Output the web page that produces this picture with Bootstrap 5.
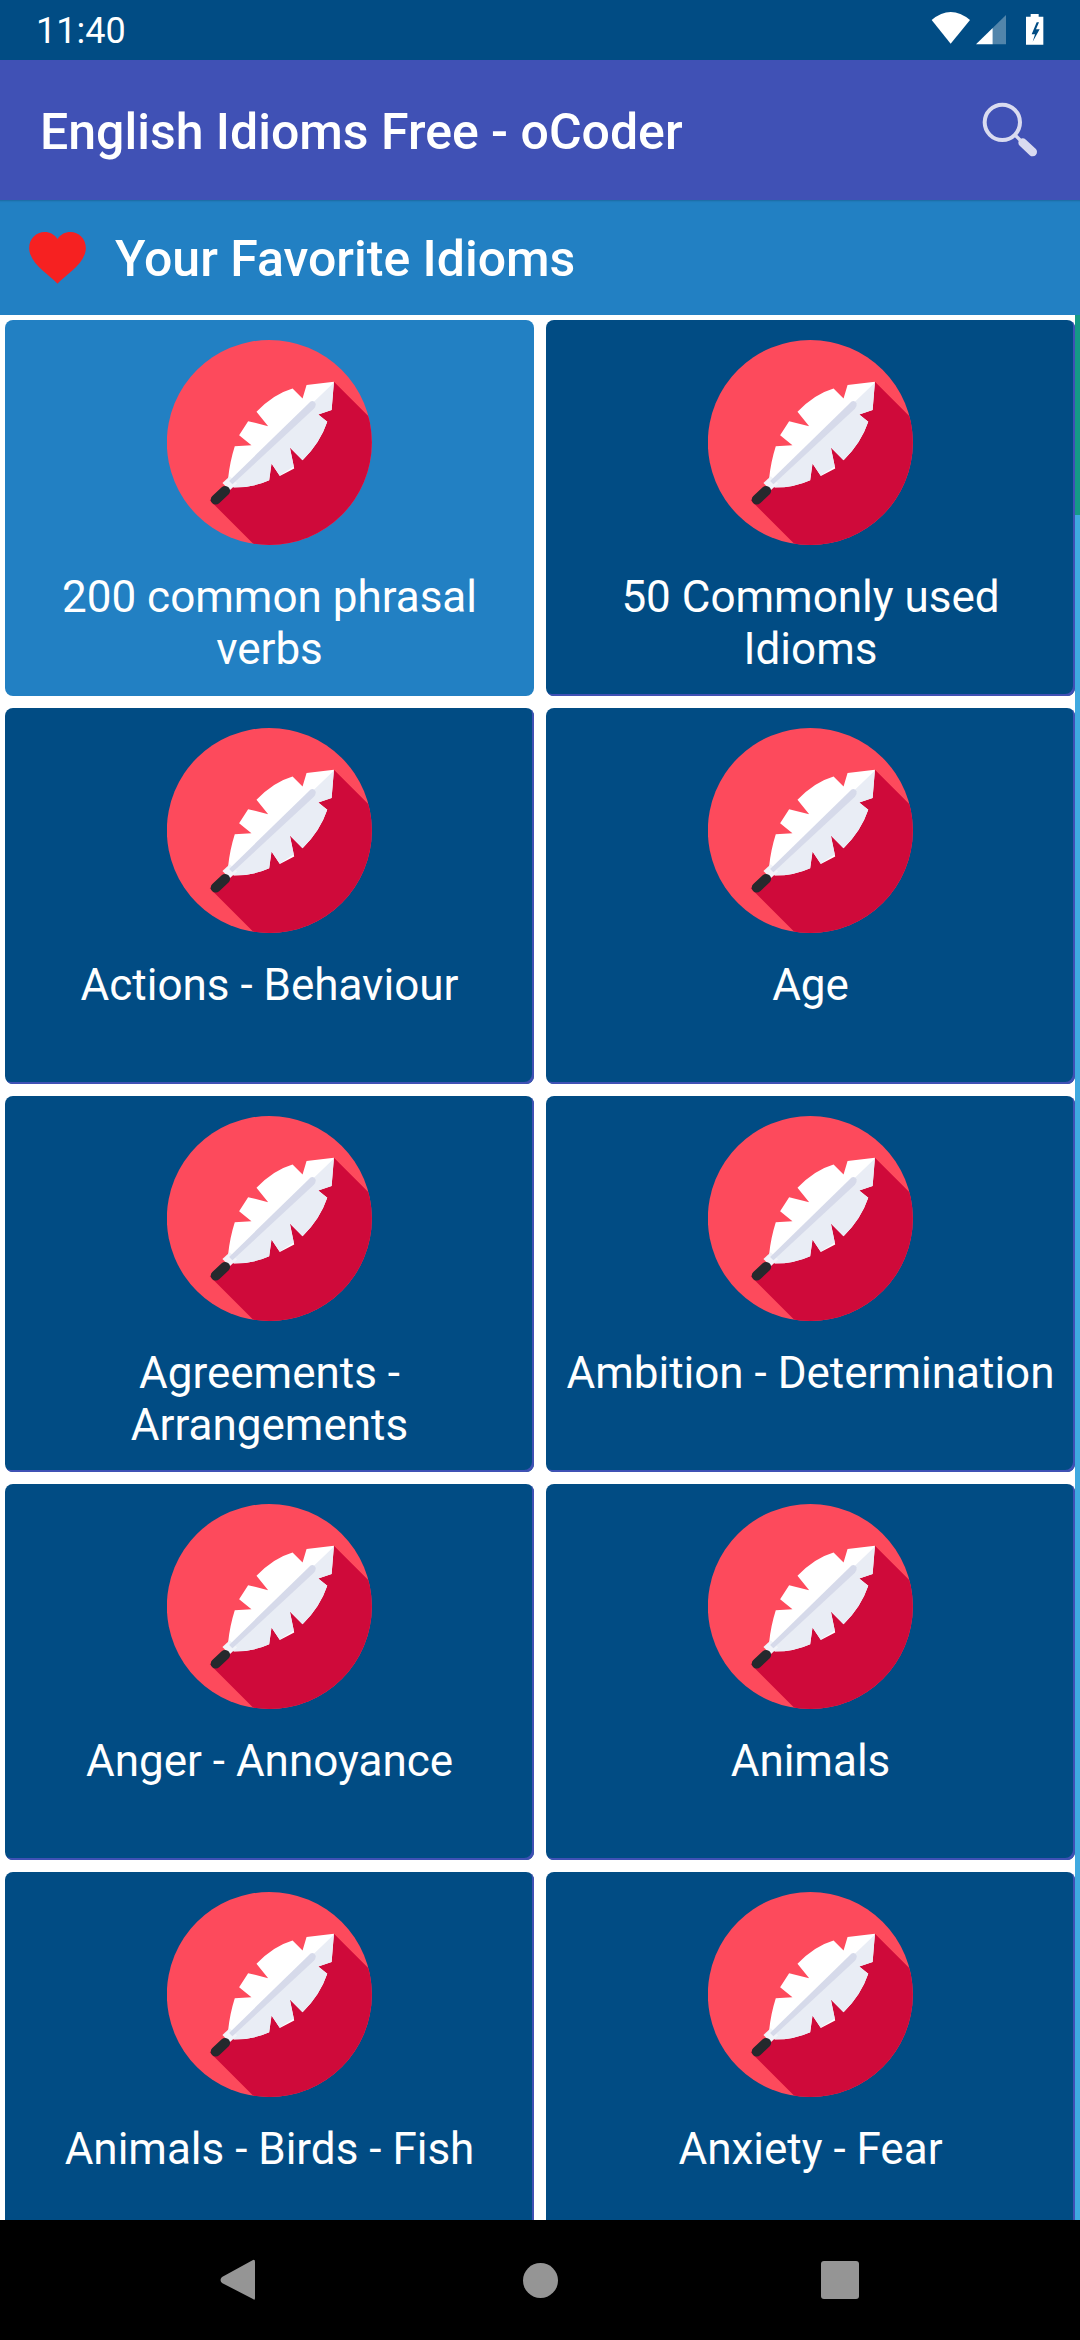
<!DOCTYPE html>
<html lang="en">
<head>
  <meta charset="UTF-8">
  <title>English Idioms Free - oCoder</title>
  <meta name="viewport" content="width=device-width, initial-scale=1">
  <link href="https://cdn.jsdelivr.net/npm/bootstrap@5.3.3/dist/css/bootstrap.min.css" rel="stylesheet">
  <style>
    body {
      width: 1080px;
      height: 2340px;
      overflow: hidden;
      font-family: Roboto, "Liberation Sans", sans-serif;
      background-color: #fff;
    }
    .phone-shell { height: 2340px; }
    .status-strip {
      height: 60px;
      padding: 0 36px;
      background-color: #014c84;
      color: #fff;
      font-size: 36px;
    }
    .status-time { padding-top: 2px; }
    .app-bar {
      height: 140px;
      padding: 0 40px;
      background-color: #4051b5;
    }
    .app-title {
      margin: 0;
      padding-top: 3px;
      color: #fff;
      font-size: 50px;
      font-weight: 500;
    }
    .fav-head {
      height: 115px;
      padding: 0 29px;
      gap: 29px;
      background-color: #2280c3;
      box-shadow: inset 0 3px 2px -2px rgba(0, 0, 0, .18);
    }
    .fav-title {
      margin: 0;
      padding-top: 3px;
      color: #fff;
      font-size: 50px;
      font-weight: 500;
    }
    .tile-area { min-height: 0; overflow: hidden; }
    .tile-scroll {
      padding: 5px 0 0 5px;
      display: grid;
      grid-template-columns: 529px 529px;
      grid-auto-rows: 376px;
      column-gap: 12px;
      row-gap: 12px;
    }
    .track {
      width: 5px;
      background-color: #3fa9e0;
    }
    .thumb {
      top: 0;
      height: 200px;
      background-color: #159a86;
    }
    .tile {
      padding-top: 20px;
      border: 0;
      border-radius: 8px;
      background-color: #014c84;
      box-shadow: inset -2px -2px 0 #4051b5;
      color: #fff;
      font-size: 44px;
      line-height: 52px;
    }
    .tile.picked {
      background-color: #2280c3;
      box-shadow: none;
    }
    .tile svg { width: 205px; height: 205px; flex: none; }
    .tile-text { padding: 26px 8px 0; }
    .soft-nav {
      height: 120px;
      background-color: #000;
    }
  </style>
</head>
<body>
  <svg width="0" height="0" class="position-absolute">
    <defs>
      <clipPath id="discClip"><circle cx="358.5" cy="337" r="307"/></clipPath>
      <clipPath id="plumeClip"><path d="M552 155 L470 165 L458 205 L428 175 Q370 192 320 245 L355 288 L295 273 L268 315 L305 345 L255 348 Q240 395 235 445 L252 472 Q310 472 358 450 L365 400 L390 437 L433 415 L420 352 L458 390 Q510 340 532 275 L505 253 L545 240 Z"/></clipPath>
      <symbol id="quill" viewBox="52 30 614 614">
        <circle cx="358.5" cy="337" r="307" fill="#fd4a5c"/>
        <path clip-path="url(#discClip)" fill="#cf0a3a" d="M552 155 L700 303 L700 700 L370 700 L180 510 L240 470 L500 240 Z"/>
        <path d="M552 155 L470 165 L458 205 L428 175 Q370 192 320 245 L355 288 L295 273 L268 315 L305 345 L255 348 Q240 395 235 445 L252 472 Q310 472 358 450 L365 400 L390 437 L433 415 L420 352 L458 390 Q510 340 532 275 L505 253 L545 240 Z" fill="#fff"/>
        <path clip-path="url(#plumeClip)" fill="#e9edf5" d="M560 150 L225 470 L260 520 L600 300 Z"/>
        <path d="M218 458 L240 480 L262 460 L240 438 Z" fill="#f2f4f9"/>
        <path d="M238 452 L482 214 Q492 210 497 220 Q499 228 492 236 L248 462 Z" fill="#d6daea"/>
        <path d="M198 508 L226 482" stroke="#25292d" stroke-width="30" stroke-linecap="round" fill="none"/>
      </symbol>
    </defs>
  </svg>

  <div class="phone-shell d-flex flex-column">
    <div class="status-strip flex-shrink-0 d-flex align-items-center justify-content-between">
      <span class="status-time">11:40</span>
      <svg width="114" height="60" viewBox="150 0 342 180">
        <path d="M155 60 Q212 12 270 60 L212 131 Z" fill="#fff"/>
        <path d="M288 133 L338 84 L338 133 Z" fill="#fff"/>
        <path d="M338 84 L378 45 L378 133 L338 133 Z" fill="#fff" opacity=".32"/>
        <path d="M452 50 V42 H476 V50 H490 V134 H438 V50 Z" fill="#fff"/>
        <path d="M470 67 L455 103 H465 L458 125 L479 88 H468 L477 67 Z" fill="#014c84"/>
      </svg>
    </div>

    <nav class="navbar app-bar flex-shrink-0 flex-nowrap justify-content-between">
      <h1 class="app-title">English Idioms Free - oCoder</h1>
      <svg width="60" height="60" viewBox="300 300 180 180">
        <circle cx="367" cy="367" r="53" fill="none" stroke="#d9dbf0" stroke-width="12"/>
        <path d="M405 405 L420 420" stroke="#d9dbf0" stroke-width="10"/>
        <path d="M428 428 L458 456" stroke="#d9dbf0" stroke-width="26" stroke-linecap="round"/>
      </svg>
    </nav>

    <div class="fav-head flex-shrink-0 d-flex align-items-center">
      <svg width="57" height="52" viewBox="88 95 170 156">
        <path d="M173 250 C150 224 88 190 88 143 C88 115 110 95 134 95 C150 95 165 103 173 116 C181 103 196 95 212 95 C236 95 258 115 258 143 C258 190 196 224 173 250 Z" fill="#f62121"/>
      </svg>
      <h2 class="fav-title">Your Favorite Idioms</h2>
    </div>

    <div class="tile-area flex-grow-1 d-flex">
      <div class="tile-scroll flex-grow-1" id="tiles"></div>
      <div class="track position-relative">
        <div class="thumb position-absolute w-100"></div>
      </div>
    </div>

    <div class="soft-nav flex-shrink-0 position-relative">
      <svg class="position-absolute top-0 start-0" width="1080" height="120" viewBox="0 2220 1080 120">
        <path d="M253 2260 Q255 2259 255 2262 V2298 Q255 2301 253 2299 L222 2283 Q219 2280 222 2277 Z" fill="#959595"/>
        <circle cx="540.5" cy="2280.5" r="17.5" fill="#959595"/>
        <rect x="821" y="2261" width="38" height="38" rx="3" fill="#959595"/>
      </svg>
    </div>
  </div>

  <script>
    const labels = [
      '200 common phrasal verbs', '50 Commonly used Idioms',
      'Actions - Behaviour', 'Age',
      'Agreements - Arrangements', 'Ambition - Determination',
      'Anger - Annoyance', 'Animals',
      'Animals - Birds - Fish', 'Anxiety - Fear'
    ];
    const box = document.getElementById('tiles');
    labels.forEach((text, i) => {
      const tile = document.createElement('div');
      tile.className = 'card tile align-items-center text-center' + (i === 0 ? ' picked' : '');
      tile.innerHTML = `<svg><use href="#quill"/></svg><div class="tile-text">${text}</div>`;
      box.appendChild(tile);
    });
  </script>
  <script src="https://cdn.jsdelivr.net/npm/bootstrap@5.3.3/dist/js/bootstrap.bundle.min.js"></script>
</body>
</html>
